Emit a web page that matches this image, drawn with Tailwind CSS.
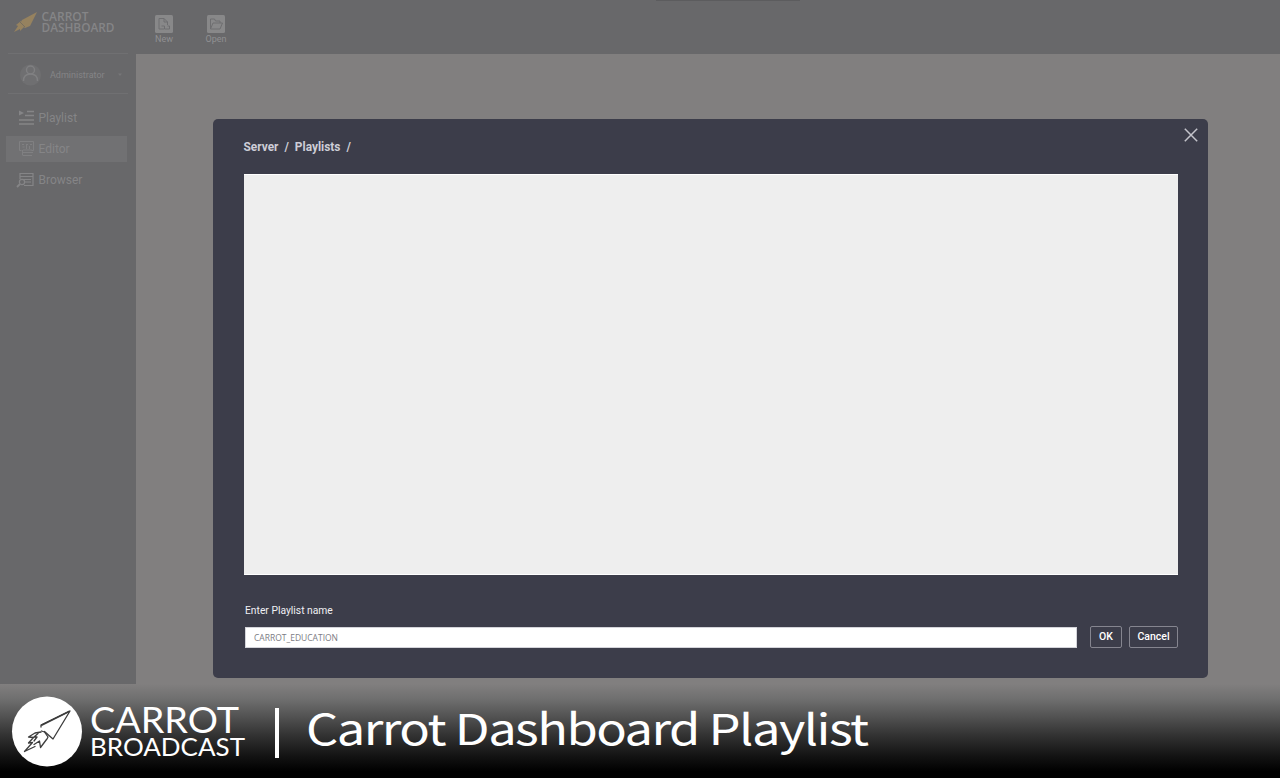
<!DOCTYPE html>
<html lang="en">
<head>
<meta charset="utf-8">
<title>Carrot Dashboard</title>
<script src="https://cdn.jsdelivr.net/npm/@tailwindcss/browser@4"></script>
</head>
<body class="relative flex h-[778px] w-[1280px] flex-col overflow-hidden bg-[#817f7f] font-['Roboto',sans-serif]">
<div class="flex h-[684px] shrink-0">
  <aside class="flex w-[136px] shrink-0 flex-col bg-[#68686a] text-[#858587]">
    <div class="h-[53px] pl-3 pt-2">
      <svg class="block" width="112" height="28" viewBox="12 8 112 28">
        <path d="M37 12L22 20l-2 4 5 4 5-2z" fill="#96825f"/>
        <path d="M21 21l-5 4 2 1-4 6 6-3v2l4-4z" fill="#96825f"/>
        <path d="M20 22l5 5" stroke="#6e6960" stroke-width=".8" fill="none"/>
        <g fill="#858587" font-family="Open Sans, sans-serif" font-weight="600" font-size="12">
          <text x="41.5" y="21" textLength="47" lengthAdjust="spacingAndGlyphs">CARROT</text>
          <text x="41.5" y="32" textLength="73" lengthAdjust="spacingAndGlyphs">DASHBOARD</text>
        </g>
      </svg>
    </div>
    <div class="mx-2 flex h-[41px] items-center border-y border-[#707072] pl-3 pt-[3px]">
      <svg width="22" height="22" viewBox="0 0 22 22" fill="none">
        <circle cx="10.5" cy="11" r="10.5" fill="#6f6f71"/>
        <circle cx="10.5" cy="6" r="4" stroke="#808082" stroke-width="1.4"/>
        <path d="M3.500 17c0-4.500 2.500-7 7-7s7 2.500 7 7" stroke="#808082" stroke-width="1.400"/>
      </svg>
      <span class="ml-2 w-[64px] pt-px text-[9px]">Administrator</span>
      <svg class="ml-[3px]" width="6" height="4"><path d="M1 .5h4L3 3z" fill="#777779"/></svg>
    </div>
    <nav class="flex flex-col gap-[5px] px-1.5 pt-[11px] text-[12px]">
      <div class="flex h-[26px] w-[121px] items-center gap-[4.5px] pl-3">
        <svg width="16" height="16" viewBox="0 0 16 16" fill="none" stroke="#858587" stroke-width="1.500"><path d="M1 .5v5l5-2.500z" fill="#858587" stroke="none"/><path d="M9 1.500h7M7 5.500h9M1 10h15M1 14h15"/></svg>
        <span>Playlist</span>
      </div>
      <div class="flex h-[26px] w-[121px] items-center gap-[3.5px] bg-[#717173] pl-[13px]">
        <svg width="16" height="16" viewBox="0 0 16 16" fill="none" stroke="#808082" stroke-width="1"><path d="M2.500 9.500h-2v-9h14v9h-2M3 3.500h2m2 0h2m2 0h2M3.500 6h2m2-2v4m3-3v3M4 9h9M3 11.500h11M4 14.500h9M3.500 9v5.500"/></svg>
        <span>Editor</span>
      </div>
      <div class="flex h-[26px] w-[121px] items-center gap-[4.5px] pl-2.5">
        <svg width="18" height="16" viewBox="0 0 18 16" fill="none" stroke="#858587" stroke-width="1.200"><path d="M4 7V1.500h13v12H8M4 4.500h13M7 7.500h8M9 10h6"/><circle cx="6" cy="10" r="2.600"/><path d="M4 12l-3 3" stroke-width="1.800"/></svg>
        <span>Browser</span>
      </div>
    </nav>
  </aside>
  <main class="flex-1">
    <header class="relative flex h-[54px] gap-[28px] bg-[#68686a] pl-4 pt-[15px] text-[9px] leading-[10px] text-[#909092]">
      <div class="flex w-6 flex-col items-center gap-px">
        <svg width="18" height="18" viewBox="0 0 18 18" fill="none"><rect width="18" height="18" rx="1.500" fill="#888889"/><path d="M9 14H4V3.500h5l3.500 3.500v3M9 3.500V7h3.500M6.500 11h3v3h5v-3h-2" stroke="#6e6e70"/></svg>
        <span>New</span>
      </div>
      <div class="flex w-6 flex-col items-center gap-px">
        <svg width="18" height="18" viewBox="0 0 18 18" fill="none"><rect width="18" height="18" rx="1.500" fill="#888889"/><path d="M3.500 14V4h4l1 2H13v2M3.500 14L6 8h9.500L13 14z" stroke="#6e6e70"/></svg>
        <span>Open</span>
      </div>
      <div class="absolute left-[520px] top-0 h-px w-[144px] bg-[#5c5c5e]"></div>
    </header>
  </main>
</div>

<footer class="flex h-[94px] shrink-0 bg-[linear-gradient(to_bottom,#817f7f_0%,#6f6f6f_16%,#505050_36%,#303030_56%,#141414_76%,#000_93%)]">
  <svg class="block" width="1280" height="94" viewBox="0 684 1280 94">
    <circle cx="47" cy="731.500" r="35" fill="#fff"/>
    <g fill="none" stroke="#3c3c3c" stroke-width="1.300" stroke-linejoin="round" stroke-linecap="round">
      <path d="M41 727v-2L70 711 53 739l-8.500-7.500"/>
      <path d="M42 725l27-13.500" stroke-width="1.800"/>
      <path d="M41.500 731l3 1 3.500 5-1 2"/>
      <path d="M41 732l-6 1-6.500 4 5 .5-5 5.500 4-.5-8 9 10.500-5"/>
      <path d="M34 744.500l5.500-3.500 1 6.500 6-8M38 733.500l-4 3.500 3 0-3 4" stroke-width="1.300"/>
    </g>
    <g fill="#fff" font-family="Lato, sans-serif">
      <text x="90" y="733" font-size="36" textLength="149" lengthAdjust="spacingAndGlyphs">CARROT</text>
      <text x="90" y="756" font-size="24.500" textLength="155" lengthAdjust="spacingAndGlyphs">BROADCAST</text>
    </g>
    <rect x="275" y="708" width="4" height="50" fill="#fff"/>
    <text class="tracking-[-1.3px]" x="306" y="745" fill="#fff" font-family="Noto Sans CJK KR, sans-serif" font-size="42.500" textLength="561.500" lengthAdjust="spacingAndGlyphs">Carrot Dashboard Playlist</text>
  </svg>
</footer>

<section class="absolute left-[213px] top-[119px] flex h-[559px] w-[995px] flex-col rounded-[5px] bg-[#3c3d4a] pl-[31px] pr-[30px]">
  <svg class="absolute right-[10px] top-[9px]" width="14" height="14" viewBox="0 0 14 14" stroke="#c4c4cb" stroke-width="1.500"><path d="M.8.8l12.400 12.400M13.200.8L.8 13.200"/></svg>
  <div class="-ml-[0.5px] flex h-[55px] items-center gap-[6px] pt-[2px] text-[11.9px] font-bold leading-none text-[#cdcdd6]">
    <span>Server</span><span>/</span><span>Playlists</span><span>/</span>
  </div>
  <div class="h-[401px] border-y border-white bg-[#eee]"></div>
  <label class="mt-[29px] pl-px text-[10.300px] leading-[14px] text-[#f0f0f4]">Enter Playlist name</label>
  <div class="mt-[8px] flex h-[22px] items-center pl-px">
    <div class="flex h-[21px] w-[832px] shrink-0 items-center border border-[#d4d4da] bg-white pl-[8px]"><svg width="90" height="18"><text x="0" y="12.500" font-family="Open Sans, sans-serif" font-size="9.500" fill="#7c7c84" textLength="84" lengthAdjust="spacingAndGlyphs">CARROT_EDUCATION</text></svg></div>
    <button class="ml-[13px] h-[22px] w-8 shrink-0 rounded-[2px] border border-[#85858f] text-[10.500px] font-medium leading-none text-white">OK</button>
    <button class="ml-[7px] h-[22px] w-[49px] shrink-0 rounded-[2px] border border-[#85858f] text-[10.500px] font-medium leading-none text-white">Cancel</button>
  </div>
</section>
</body>
</html>
